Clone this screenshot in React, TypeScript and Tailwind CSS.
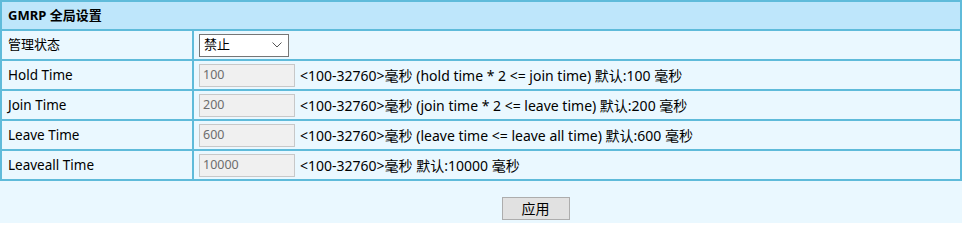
import React from 'react';

const rows = [
  { label: 'Hold Time', value: '100', hint: '<100-32760>毫秒 (hold time * 2 <= join time) 默认:100 毫秒' },
  { label: 'Join Time', value: '200', hint: '<100-32760>毫秒 (join time * 2 <= leave time) 默认:200 毫秒' },
  { label: 'Leave Time', value: '600', hint: '<100-32760>毫秒 (leave time <= leave all time) 默认:600 毫秒' },
  { label: 'Leaveall Time', value: '10000', hint: '<100-32760>毫秒 默认:10000 毫秒' },
];

export default function App() {
  return (
    <div
      className="w-[962px] h-[223px] bg-[#eaf8ff] text-[13.5px] text-black"
      style={{ fontFamily: '"Noto Sans", "Noto Sans CJK SC", sans-serif' }}
    >
      <div className="grid grid-cols-[190px_1fr] gap-[2px] p-[2px] bg-[#5fbbda]">
        <div className="col-span-2 h-[27px] bg-[#bee6fb] flex items-center px-[6px] font-bold text-[13px]">
          GMRP 全局设置
        </div>
        <div className="h-[28px] bg-[#eaf8ff] flex items-center px-[6px] text-[13px]">管理状态</div>
        <div className="h-[28px] bg-[#eaf8ff] flex items-center px-[5px]">
          <div className="w-[90px] h-[23px] bg-white border border-[#767676] flex items-center justify-between pl-[4px] pr-[6px] text-[13px]">
            <span>禁止</span>
            <svg width="10" height="6" viewBox="0 0 10 6" fill="none" stroke="#555" strokeWidth="1">
              <path d="M0.5 0.5 L5 5 L9.5 0.5" />
            </svg>
          </div>
        </div>
        {rows.map((r) => (
          <React.Fragment key={r.label}>
            <div className="h-[28px] bg-[#eaf8ff] flex items-center px-[6px]">{r.label}</div>
            <div className="h-[28px] bg-[#eaf8ff] flex items-center px-[5px] gap-[5px]">
              <div className="w-[96px] h-[23px] bg-[#f0f0f0] border border-[#c8c8c8] flex items-center px-[3px] text-[#6d6d6d] text-[12.5px]">
                {r.value}
              </div>
              <span className="text-[14px]">{r.hint}</span>
            </div>
          </React.Fragment>
        ))}
      </div>
      <div className="flex justify-center pt-[16px] pl-[109px]">
        <button className="w-[68px] h-[23px] bg-[#e1e1e1] border border-[#adadad] text-[14px]">应用</button>
      </div>
    </div>
  );
}
